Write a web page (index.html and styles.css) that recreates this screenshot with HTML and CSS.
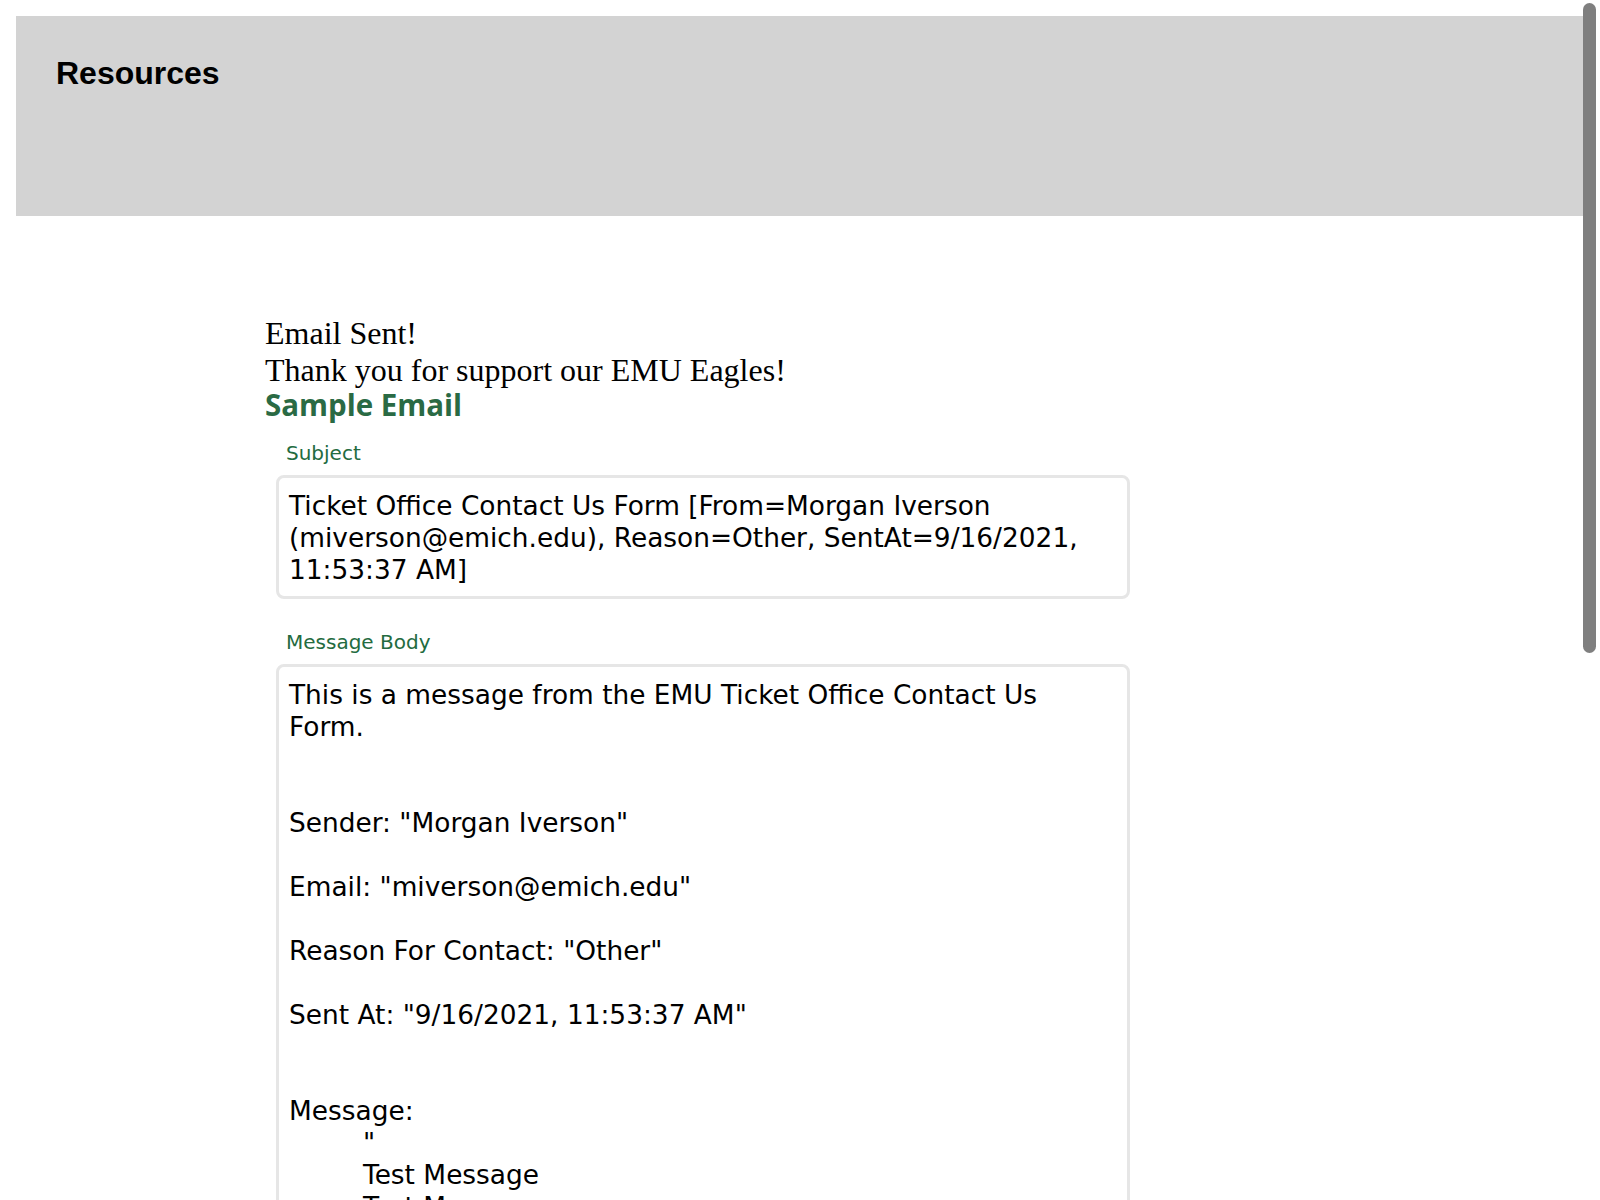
FILE: index.html
```html
<!DOCTYPE html>
<html lang="en">
<head>
<meta charset="utf-8">
<title>Resources</title>
<link rel="stylesheet" href="styles.css">
</head>
<body>
<div class="page">
  <header class="banner">
    <h1 class="banner-title">Resources</h1>
  </header>
  <main class="content">
    <div class="confirm">
      <div class="confirm-line">Email Sent!</div>
      <div class="confirm-line">Thank you for support our EMU Eagles!</div>
    </div>
    <h2 class="sample-title">Sample Email</h2>
    <div class="field">
      <div class="field-label">Subject</div>
      <div class="field-box field-subject">Ticket Office Contact Us Form [From=Morgan Iverson (miverson@emich.edu), Reason=Other, SentAt=9/16/2021, 11:53:37 AM]</div>
    </div>
    <div class="field field-gap">
      <div class="field-label">Message Body</div>
      <div class="field-box field-body">This is a message from the EMU Ticket Office Contact Us Form.


Sender: "Morgan Iverson"

Email: "miverson@emich.edu"

Reason For Contact: "Other"

Sent At: "9/16/2021, 11:53:37 AM"


Message:
	"
	Test Message
	Test Message
	Test Message
	"
</div>
    </div>
  </main>
</div>
<div class="scroll-thumb"></div>
</body>
</html>
```

FILE: styles.css
```css
html {
  scrollbar-width: none;
}
html::-webkit-scrollbar,
body::-webkit-scrollbar {
  display: none;
  width: 0;
}
body {
  margin: 0;
  background: #ffffff;
  color: #000000;
  font-family: "Liberation Serif", "Times New Roman", serif;
}
.page {
  padding: 16px;
}
.banner {
  box-sizing: border-box;
  height: 200px;
  background: #d3d3d3;
  padding: 39px 40px;
}
.banner-title {
  margin: 0;
  font-family: "Liberation Sans", Arial, sans-serif;
  font-weight: bold;
  font-size: 32px;
  line-height: normal;
}
.content {
  padding: 99px 0 0 249px;
}
.confirm-line {
  font-size: 32px;
  line-height: normal;
}
.sample-title {
  margin: 0;
  font-family: "Open Sans", "DejaVu Sans", sans-serif;
  font-weight: 700;
  font-size: 29.5px;
  line-height: 32px;
  color: #2a6a44;
}
.field {
  margin: 20px 0 0 11px;
}
.field-gap {
  margin-top: 31px;
}
.field-label {
  font-family: "DejaVu Sans", Verdana, sans-serif;
  font-size: 20px;
  line-height: 24px;
  color: #236b40;
  padding-left: 10px;
  margin-bottom: 10px;
}
.field-box {
  box-sizing: border-box;
  width: 854px;
  border: 3px solid #e6e6e6;
  border-radius: 8px;
  padding: 12px 36px 10px 10px;
  font-family: "DejaVu Sans", Verdana, sans-serif;
  font-size: 26.4px;
  line-height: 32px;
  color: #000000;
  white-space: pre-wrap;
  tab-size: 74px;
}
.scroll-thumb {
  position: fixed;
  top: 3px;
  right: 4px;
  width: 13px;
  height: 650px;
  border-radius: 7px;
  background: #7f7f7f;
}
```
